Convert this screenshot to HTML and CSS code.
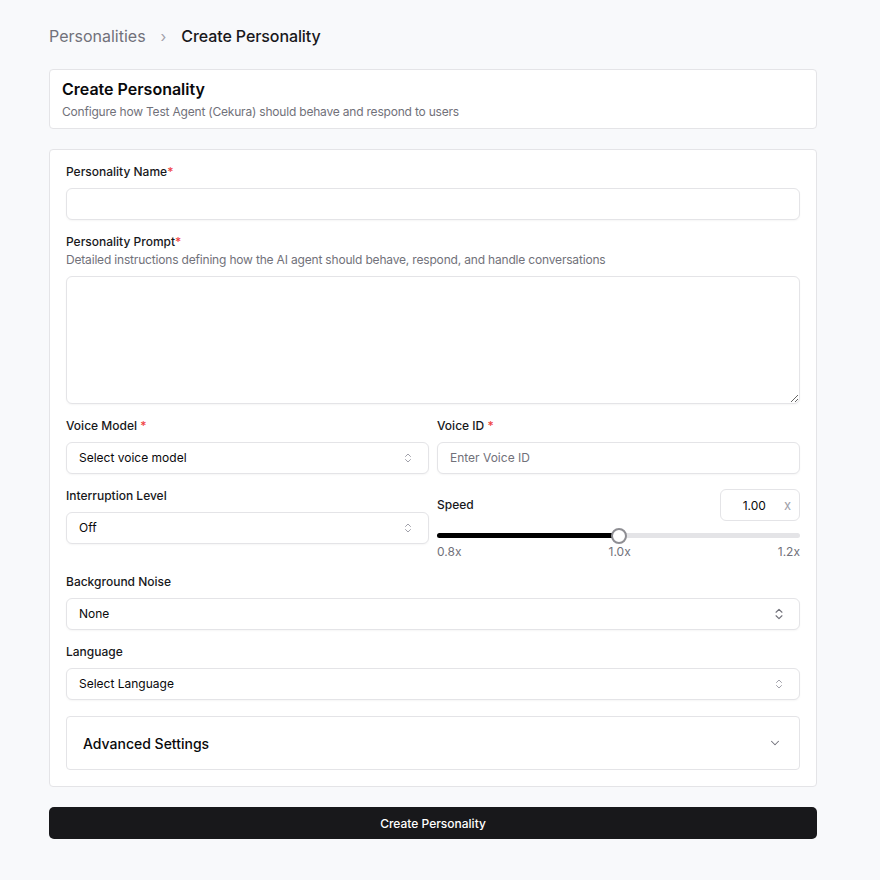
FILE: index.html
```html
<!DOCTYPE html>
<html lang="en">
<head>
    <meta charset="UTF-8">
    <title>Create Personality</title>
    <link rel="stylesheet" href="styles.css">
</head>
<body>
    <div class="page">
        <!-- breadcrumb -->
        <nav class="crumbs">
            <span class="crumb-link">Personalities</span>
            <span class="crumb-sep">›</span>
            <span class="crumb-current">Create Personality</span>
        </nav>

        <div class="card head-card">
            <h1>Create Personality</h1>
            <p class="sub">Configure how Test Agent (Cekura) should behave and respond to users</p>
        </div>

        <form class="card form-card">
            <div class="field">
                <label>Personality Name<span class="req">*</span></label>
                <input class="input" type="text">
            </div>

            <div class="field">
                <label>Personality Prompt<span class="req">*</span></label>
                <p class="hint">Detailed instructions defining how the AI agent should behave, respond, and handle conversations</p>
                <textarea class="input area"></textarea>
            </div>

            <div class="row">
                <div class="field">
                    <label>Voice Model <span class="req">*</span></label>
                    <div class="select">
                        <span>Select voice model</span>
                        <svg class="updown" viewBox="0 0 24 24"><path d="m7 15 5 5 5-5"/><path d="m7 9 5-5 5 5"/></svg>
                    </div>
                </div>
                <div class="field">
                    <label>Voice ID <span class="req">*</span></label>
                    <div class="input placeholder">Enter Voice ID</div>
                </div>
            </div>

            <div class="row">
                <div class="field">
                    <label>Interruption Level</label>
                    <div class="select">
                        <span>Off</span>
                        <svg class="updown" viewBox="0 0 24 24"><path d="m7 15 5 5 5-5"/><path d="m7 9 5-5 5 5"/></svg>
                    </div>
                </div>
                <div class="field speed">
                    <div class="speed-top">
                        <label>Speed</label>
                        <div class="speed-box"><span class="num">1.00</span><span class="unit">x</span></div>
                    </div>
                    <div class="slider">
                        <div class="fill" style="width: 50%"></div>
                        <div class="thumb" style="left: 50%"></div>
                    </div>
                    <div class="ticks"><span>0.8x</span><span>1.0x</span><span>1.2x</span></div>
                </div>
            </div>

            <div class="field">
                <label>Background Noise</label>
                <div class="select">
                    <span>None</span>
                    <svg class="updown big" viewBox="0 0 24 24"><path d="m7 15 5 5 5-5"/><path d="m7 9 5-5 5 5"/></svg>
                </div>
            </div>

            <div class="field">
                <label>Language</label>
                <div class="select">
                    <span>Select Language</span>
                    <svg class="updown" viewBox="0 0 24 24"><path d="m7 15 5 5 5-5"/><path d="m7 9 5-5 5 5"/></svg>
                </div>
            </div>

            <div class="advanced">
                <span>Advanced Settings</span>
                <svg class="chev" viewBox="0 0 24 24"><path d="m6 9 6 6 6-6"/></svg>
            </div>
        </form>

        <button class="submit" type="button">Create Personality</button>
    </div>
</body>
</html>
```

FILE: styles.css
```css
body {
    margin: 0;
    background: #f8f9fb;
    font-family: Inter, "Noto Sans", sans-serif;
    color: #09090b;
}

.page {
    width: 768px;
    padding: 25px 0 0 49px;
}

.crumbs {
    display: flex;
    align-items: center;
    gap: 15px;
    font-size: 16px;
    height: 22px;
    margin-bottom: 22px;
}

.crumb-link {
    color: #71717a;
}

.crumb-sep {
    color: #a1a1aa;
    font-size: 15px;
}

.crumb-current {
    font-weight: 500;
    color: #18181b;
    letter-spacing: -0.1px;
}

.card {
    background: #fff;
    border: 1px solid #e4e4e7;
    border-radius: 4px;
    box-sizing: border-box;
}

.head-card {
    height: 60px;
    padding: 9px 12px;
    margin-bottom: 20px;
}

.head-card h1 {
    margin: 0;
    font-size: 16px;
    font-weight: 600;
    line-height: 20px;
}

.head-card .sub {
    margin: 5px 0 0;
    font-size: 12px;
    letter-spacing: -0.2px;
    color: #71717a;
    line-height: 16px;
}

.form-card {
    padding: 14px 16px 16px;
    display: flex;
    flex-direction: column;
    gap: 14px;
    margin-bottom: 20px;
}

.field {
    display: flex;
    flex-direction: column;
    min-width: 0;
}

label {
    font-size: 12px;
    font-weight: 500;
    line-height: 16px;
    margin-bottom: 8px;
    color: #18181b;
}

.req {
    color: #ef4444;
}

.hint {
    margin: -8px 0 6px;
    font-size: 12px;
    letter-spacing: -0.18px;
    line-height: 20px;
    color: #71717a;
}

.input {
    height: 32px;
    box-sizing: border-box;
    border: 1px solid #e4e4e7;
    border-radius: 6px;
    background: #fff;
    font: inherit;
    font-size: 12px;
    padding: 0 12px;
    box-shadow: 0 1px 2px rgba(0, 0, 0, 0.04);
}

.area {
    height: 128px;
    resize: vertical;
}

.placeholder {
    display: flex;
    align-items: center;
    padding-bottom: 1px;
    color: #71717a;
}

.row {
    display: grid;
    grid-template-columns: 1fr 1fr;
    gap: 8px;
}

.select {
    height: 32px;
    box-sizing: border-box;
    border: 1px solid #e4e4e7;
    border-radius: 6px;
    background: #fff;
    display: flex;
    align-items: center;
    justify-content: space-between;
    padding: 0 14px 1px 12px;
    font-size: 12px;
    box-shadow: 0 1px 2px rgba(0, 0, 0, 0.04);
}

.updown {
    width: 12px;
    height: 12px;
    fill: none;
    stroke: #a1a1aa;
    stroke-width: 2;
    stroke-linecap: round;
    stroke-linejoin: round;
}

.updown.big {
    width: 14px;
    height: 14px;
    stroke: #71717a;
    margin-right: -1px;
}

.speed {
    margin-top: 1px;
}

.speed-top {
    display: flex;
    align-items: center;
    justify-content: space-between;
}

.speed-top label {
    margin: 0;
}

.speed-box {
    width: 80px;
    height: 32px;
    box-sizing: border-box;
    border: 1px solid #e4e4e7;
    border-radius: 6px;
    display: flex;
    align-items: center;
    justify-content: flex-end;
    font-size: 12px;
    padding-right: 8px;
}

.speed-box .num {
    margin-right: 18px;
}

.speed-box .unit {
    color: #a1a1aa;
    font-size: 13px;
}

.slider {
    position: relative;
    height: 5px;
    border-radius: 3px;
    background: #e4e4e7;
    margin-top: 12px;
}

.slider .fill {
    height: 100%;
    border-radius: 3px;
    background: #000;
}

.slider .thumb {
    position: absolute;
    top: 50%;
    width: 12px;
    height: 12px;
    margin: -8px 0 0 -8px;
    border: 2px solid #8e8e93;
    border-radius: 50%;
    background: #fff;
}

.ticks {
    display: flex;
    justify-content: space-between;
    font-size: 12px;
    color: #71717a;
    margin-top: 6px;
    line-height: 16px;
}

.advanced {
    margin-top: 2px;
    height: 54px;
    box-sizing: border-box;
    border: 1px solid #e4e4e7;
    border-radius: 4px;
    display: flex;
    align-items: center;
    justify-content: space-between;
    padding: 0 17px 0 16px;
    font-size: 14px;
    font-weight: 500;
}

.chev {
    width: 14px;
    height: 14px;
    fill: none;
    stroke: #71717a;
    stroke-width: 1.8;
    stroke-linecap: round;
    stroke-linejoin: round;
}

.submit {
    width: 768px;
    height: 32px;
    border: none;
    border-radius: 5px;
    background: #18181b;
    color: #fff;
    font: inherit;
    font-size: 12px;
    font-weight: 500;
    cursor: pointer;
}
```
